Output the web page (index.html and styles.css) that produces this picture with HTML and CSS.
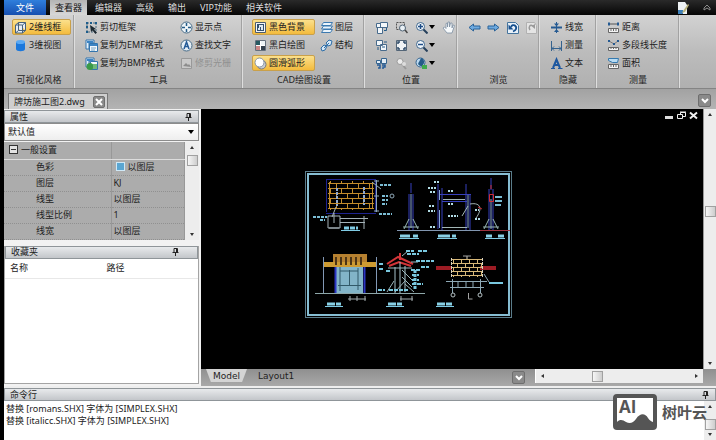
FILE: index.html
```html
<!DOCTYPE html>
<html lang="zh-CN">
<head>
  <meta charset="UTF-8">
  <title>牌坊施工图2.dwg</title>
  <link rel="stylesheet" href="styles.css">
</head>
<body>

  <!-- icon set -->
  <svg class="sprite" width="0" height="0" aria-hidden="true">
    <symbol id="i-wire" viewBox="0 0 13 13"><path d="M1.500 4l3-2.500h7v8l-3 2.500h-7zM1.500 4h7v8M8.500 4l3-2.500M4.500 1.500v8h7M4.500 9.500l-3 2.500" fill="#e8eef4" stroke="#45617c"/></symbol>
    <symbol id="i-cyl" viewBox="0 0 13 13"><path d="M2 3v7c0 3 9 3 9 0V3z" fill="#1c78dc"/><ellipse cx="6.500" cy="3" rx="4.500" ry="2" fill="#5aa9f4"/></symbol>
    <symbol id="i-clip" viewBox="0 0 13 13"><path d="M2 2h9v9H2z" fill="none" stroke="#4a6a80" stroke-dasharray="2 1"/><path d="M1 1h2v2H1zM10 1h2v2h-2zM1 10h2v2H1zM5 1h2v2H5zM1 5h2v2H1z" fill="#1d5d8c"/><path d="M5 4l6 4-2 .5 3 3-1.500 1.500-3-3.500L6 11z" fill="#1d2a33"/></symbol>
    <symbol id="i-emf" viewBox="0 0 13 13"><path d="M1 1h8v3H4v6H1z" fill="#e4f0fa" stroke="#3375ae"/><path d="M4.500 4.500h8v8h-8z" fill="#f3f8fc" stroke="#3375ae"/><path d="M2 2h6v2H2zM5 5h7v2H5z" fill="#3c84c4"/><path d="M6 9h5M6 11h4" stroke="#78a4c4"/></symbol>
    <symbol id="i-bmp" viewBox="0 0 13 13"><path d="M1 1h8v3H4v6H1z" fill="#e4f0fa" stroke="#3375ae"/><path d="M5.500 4.500h7v8h-7z" fill="#f3f8fc" stroke="#3375ae"/><path d="M2 2h6v2H2z" fill="#3c84c4"/><circle cx="5" cy="9.500" r="3.500" fill="#3b9a48"/><path d="M8 7h4v5H8z" fill="#6fb87a"/></symbol>
    <symbol id="i-point" viewBox="0 0 13 13"><circle cx="6.500" cy="6.500" r="5.500" fill="#eef4f8" stroke="#466a86"/><path d="M6.500 2v3M6.500 8v3M2 6.500h3M8 6.500h3" stroke="#245b88" stroke-width="1.500"/></symbol>
    <symbol id="i-find" viewBox="0 0 13 13"><circle cx="6.500" cy="6.500" r="5.500" fill="#e4eef6" stroke="#466a86"/><path d="M4 10l2.500-7L9 10M5 7.500h3" fill="none" stroke="#245b98" stroke-width="1.500"/></symbol>
    <symbol id="i-raster" viewBox="0 0 13 13"><path d="M1.500 1.500h10v10h-10z" fill="#c9c9c9" stroke="#999"/><path d="M3 9l3-3 2 2 1-1 2 3z" fill="#8d8d8d"/></symbol>
    <symbol id="i-dark" viewBox="0 0 13 13"><path d="M1.500 1.500h10v10h-10z" fill="#f4f6f8" stroke="#4c5d70"/><path d="M3 3h7v7H3z" fill="#33506e"/><path d="M5 4h4v5H7V6H6v3H4V7h1z" fill="#dfe9f2"/></symbol>
    <symbol id="i-bw" viewBox="0 0 13 13"><path d="M1.500 1.500h10v10h-10z" fill="#fff" stroke="#65707c"/><path d="M2 2h4v4H2z" fill="#285a62"/><path d="M7 7h4v4H7z" fill="#32404c"/><path d="M7 2h4v4H7z" fill="#ecf3f5"/><path d="M2 7h4v4H2z" fill="#c88"/></symbol>
    <symbol id="i-arc" viewBox="0 0 13 13"><circle cx="7.500" cy="7.500" r="4.500" fill="#c6ccd4" stroke="#777"/><circle cx="5.500" cy="5.500" r="4.500" fill="#fff" stroke="#8793a0"/></symbol>
    <symbol id="i-layer" viewBox="0 0 13 13"><path d="M3.500 1.500h9l-2 3h-9zM3.500 5h9l-2 3h-9zM3.500 8.500h9l-2 3h-9z" fill="#eaf4fc" stroke="#3d7ab0"/></symbol>
    <symbol id="i-link" viewBox="0 0 13 13"><g fill="#d6e8f6" stroke="#2e6ea8"><path d="M1 9l3-3 3 1-2 4-3 1zM6 4l3-3 3 1-1 4-3 1z"/><path d="M4 9l5-5"/></g></symbol>
    <symbol id="i-view1" viewBox="0 0 13 13"><g fill="#f3f7fa" stroke="#486b8c"><path d="M5.500 1.500h7v5h-7zM1.500 2.500h4v4h-4zM2.500 6.500h5v6h-5z"/></g><path d="M9 9.500h2.500V7" fill="none" stroke="#245b88"/></symbol>
    <symbol id="i-view2" viewBox="0 0 13 13"><g fill="#f3f7fa" stroke="#486b8c"><path d="M1.500 1.500h6v5h-6zM5.500 5.500h6v6h-6z"/></g><path d="M9 3h3M3 8v3M7 8h3" stroke="#245b88" fill="none"/></symbol>
    <symbol id="i-view3" viewBox="0 0 13 13"><g fill="#e3edf6" stroke="#36648e"><path d="M6.500 1.500h5v5h-5zM1.500 3.500h4v3h-4z"/></g><path d="M2 8h3v3H3M7 8h3v2H8v2" fill="none" stroke="#245b98" stroke-width="1.500"/></symbol>
    <symbol id="i-zoomwin" viewBox="0 0 13 13"><path d="M1.500 1.500h8v7h-8z" fill="none" stroke="#555" stroke-dasharray="2 1"/><circle cx="7.500" cy="7" r="3" fill="#e9f0f5" stroke="#506476"/><path d="M10 9l2.500 3" stroke="#444" stroke-width="1.500"/></symbol>
    <symbol id="i-fit" viewBox="0 0 13 13"><path d="M1.500 1.500h10v10h-10z" fill="#f0f3f5" stroke="#536577"/><path d="M3 5V3h2M8 3h2v2M10 8v2H8M5 10H3V8" fill="none" stroke="#2c4a68" stroke-width="1.500"/></symbol>
    <symbol id="i-zoomoff" viewBox="0 0 13 13"><circle cx="5" cy="4.500" r="3" fill="#ececec" stroke="#9b9b9b"/><path d="M7 7l4 5" stroke="#999" stroke-width="2"/><circle cx="9" cy="7" r="2" fill="#ddd"/></symbol>
    <symbol id="i-zoomin" viewBox="0 0 13 13"><circle cx="5.500" cy="5.500" r="4" fill="#f3f8fc" stroke="#3f678d"/><path d="M3 5.500h5M5.500 3v5" stroke="#1e4d86" stroke-width="1.500"/><path d="M8.500 8.500l4 4" stroke="#26405c" stroke-width="2"/></symbol>
    <symbol id="i-zoomout" viewBox="0 0 13 13"><circle cx="5.500" cy="5.500" r="4" fill="#f3f8fc" stroke="#3f678d"/><path d="M3 5.500h5" stroke="#1e4d86" stroke-width="1.500"/><path d="M8.500 8.500l4 4" stroke="#26405c" stroke-width="2"/></symbol>
    <symbol id="i-globe" viewBox="0 0 13 13"><circle cx="5.500" cy="5.500" r="4.500" fill="#bcd9f0" stroke="#36648e"/><path d="M6 1c4 1 4 6 1 8-3 0-5-2-3-4z" fill="#245b88"/><path d="M7 8h5v4H7z" fill="#3faa4d"/></symbol>
    <symbol id="i-hand" viewBox="0 0 13 13"><path d="M5 12L1 7l1.500-1L4 7.500V2.500l1.500-.5v4l.5-5h1.500v5l1-4H10v5l1-3 1.500.5L11 9l-1 3z" fill="#f6f9fb" stroke="#7d8fa2" stroke-width=".8"/></symbol>
    <symbol id="i-left" viewBox="0 0 13 13"><path d="M1 6.500L5.500 3v2H12v3H5.500v2z" fill="#6eaae0" stroke="#2a6298"/></symbol>
    <symbol id="i-right" viewBox="0 0 13 13"><path d="M12 6.500L7.500 3v2H1v3h6.500v2z" fill="#6eaae0" stroke="#2a6298"/></symbol>
    <symbol id="i-undo" viewBox="0 0 13 13"><path d="M1.500 1.500h8l3 3v8h-11z" fill="#e8f1f9" stroke="#45749d"/><path d="M5 6c2-4 6-1 5 2-.5 1.500-1.500 2-3 2.500" fill="none" stroke="#164f8e" stroke-width="1.800"/><path d="M2.500 3.500v5h5z" fill="#164f8e"/></symbol>
    <symbol id="i-redo" viewBox="0 0 13 13"><path d="M1.500 1.500h8l2 3v8h-10z" fill="#e4e4e4" stroke="#b1b1b1"/><path d="M8 5C5 3 3 6 5 9" fill="none" stroke="#999" stroke-width="1.500"/><path d="M10 3v5L6.500 5z" fill="#999"/></symbol>
    <symbol id="i-lw" viewBox="0 0 13 13"><path d="M1 6.500h11" stroke="#255a92" stroke-width="2"/><path d="M6.500 1v11" stroke="#255a92"/><path d="M4 2.500h5L6.500 5.500zM4 11h5L6.500 8z" fill="#255a92"/></symbol>
    <symbol id="i-dim" viewBox="0 0 13 13"><path d="M1.500 2v10M11.500 2v10M2 9.500h9M4 7.500l-2 2 2 2M9 7.500l2 2-2 2" fill="none" stroke="#34628e"/></symbol>
    <symbol id="i-a" viewBox="0 0 13 13"><path d="M3 11L6.500 2.500 10 11M4.500 8h4" fill="none" stroke="#1d57a0" stroke-width="2"/><path d="M1 11.500h4M8 11.500h4.500" stroke="#1d57a0"/></symbol>
    <symbol id="i-dist" viewBox="0 0 13 13"><path d="M2 3h9" stroke="#555"/><path d="M1 1.500h2v3H1zM10 1.500h2v3h-2z" fill="#255a92"/><path d="M1.500 7.500h10v4h-10z" fill="#f4f4f4" stroke="#666"/><path d="M4 8v2M6.500 8v2M9 8v2" stroke="#666"/></symbol>
    <symbol id="i-poly" viewBox="0 0 13 13"><path d="M2 2l5 3 4-3" fill="none" stroke="#777"/><path d="M1 1h2v2H1zM6 4h2v2H6zM10 1h2v2h-2z" fill="#255a92"/><path d="M1.500 8.500h10v3h-10z" fill="#f4f4f4" stroke="#666"/><path d="M4 9v1M6.500 9v1M9 9v1" stroke="#666"/></symbol>
    <symbol id="i-area" viewBox="0 0 13 13"><path d="M1.500 1.500h10l-1 4h-5l-4-2z" fill="#b8dcf4" stroke="#3579ae"/><path d="M1.500 7.500h10v4h-10z" fill="#f4f4f4" stroke="#666"/><path d="M4 8v2M6.500 8v2M9 8v2" stroke="#666"/></symbol>
    <symbol id="i-pin" viewBox="0 0 7 8"><path d="M2 .5h3.500v4H2zM4.500 1v3M.5 4.500h6M3.500 5v3" fill="none" stroke="#222"/></symbol>
    <symbol id="i-down" viewBox="0 0 6 4"><path d="M0 0h6L3 4z"/></symbol>
    <symbol id="i-chev" viewBox="0 0 8 8"><path d="M1 2l3 3 3-3" fill="none" stroke="#fff" stroke-width="2"/></symbol>
  </svg>

  <div class="window">

    <nav class="menubar">
      <button class="menu file">文件</button>
      <button class="menu current">查看器</button>
      <button class="menu">编辑器</button>
      <button class="menu">高级</button>
      <button class="menu">输出</button>
      <button class="menu">VIP功能</button>
      <button class="menu">相关软件</button>
      <div class="menu-tools">
        <button class="plain" aria-label="样式"><svg width="12" height="12" viewBox="0 0 12 12"><path d="M1 0h7l2 3v9H1z" fill="#eef2f4"/><path d="M1 8h5v4H1z" fill="#3d7fb8"/><path d="M11 2l-5 7-1 2 3-1 4-7z" fill="#b9b27c"/></svg></button>
        <button class="plain" aria-label="收起"><svg width="8" height="8" viewBox="0 0 8 8"><path d="M1 4l3-3 3 3v2L4 4 1 6z" fill="none" stroke="#8c8c8c"/></svg></button>
      </div>
    </nav>

    <div class="ribbon">
      <section class="group style">
        <div class="tools">
          <button class="tool on"><svg><use href="#i-wire"/></svg>2维线框</button>
          <button class="tool"><svg><use href="#i-cyl"/></svg>3维视图</button>
        </div>
        <h2>可视化风格</h2>
      </section>
      <section class="group kit">
        <div class="tools">
          <button class="tool"><svg><use href="#i-clip"/></svg>剪切框架</button>
          <button class="tool"><svg><use href="#i-emf"/></svg>复制为EMF格式</button>
          <button class="tool"><svg><use href="#i-bmp"/></svg>复制为BMP格式</button>
          <button class="tool"><svg><use href="#i-point"/></svg>显示点</button>
          <button class="tool"><svg><use href="#i-find"/></svg>查找文字</button>
          <button class="tool" disabled><svg><use href="#i-raster"/></svg>修剪光栅</button>
        </div>
        <h2>工具</h2>
      </section>
      <section class="group draw">
        <div class="tools">
          <button class="tool on"><svg><use href="#i-dark"/></svg>黑色背景</button>
          <button class="tool"><svg><use href="#i-bw"/></svg>黑白绘图</button>
          <button class="tool on"><svg><use href="#i-arc"/></svg>圆滑弧形</button>
          <button class="tool"><svg><use href="#i-layer"/></svg>图层</button>
          <button class="tool"><svg><use href="#i-link"/></svg>结构</button>
        </div>
        <h2>CAD绘图设置</h2>
      </section>
      <section class="group place">
        <div class="tools">
          <button class="tool" aria-label="视图一"><svg><use href="#i-view1"/></svg></button>
          <button class="tool" aria-label="视图二"><svg><use href="#i-view2"/></svg></button>
          <button class="tool" aria-label="视图三"><svg><use href="#i-view3"/></svg></button>
          <button class="tool" aria-label="窗口缩放"><svg><use href="#i-zoomwin"/></svg></button>
          <button class="tool" aria-label="适合窗口"><svg><use href="#i-fit"/></svg></button>
          <button class="tool" aria-label="缩放选择"><svg><use href="#i-zoomoff"/></svg></button>
          <button class="tool" aria-label="放大"><svg><use href="#i-zoomin"/></svg><svg class="caret"><use href="#i-down"/></svg></button>
          <button class="tool" aria-label="缩小"><svg><use href="#i-zoomout"/></svg><svg class="caret"><use href="#i-down"/></svg></button>
          <button class="tool" aria-label="旋转"><svg><use href="#i-globe"/></svg><svg class="caret"><use href="#i-down"/></svg></button>
          <button class="tool" aria-label="平移"><svg><use href="#i-hand"/></svg></button>
        </div>
        <h2>位置</h2>
      </section>
      <section class="group browse">
        <div class="tools">
          <button class="tool" aria-label="后退"><svg><use href="#i-left"/></svg></button>
          <button class="tool" aria-label="前进"><svg><use href="#i-right"/></svg></button>
          <button class="tool" aria-label="撤销"><svg><use href="#i-undo"/></svg></button>
          <button class="tool" aria-label="重做"><svg><use href="#i-redo"/></svg></button>
        </div>
        <h2>浏览</h2>
      </section>
      <section class="group hide">
        <div class="tools">
          <button class="tool"><svg><use href="#i-lw"/></svg>线宽</button>
          <button class="tool"><svg><use href="#i-dim"/></svg>测量</button>
          <button class="tool"><svg><use href="#i-a"/></svg>文本</button>
        </div>
        <h2>隐藏</h2>
      </section>
      <section class="group measure">
        <div class="tools">
          <button class="tool"><svg><use href="#i-dist"/></svg>距离</button>
          <button class="tool"><svg><use href="#i-poly"/></svg>多段线长度</button>
          <button class="tool"><svg><use href="#i-area"/></svg>面积</button>
        </div>
        <h2>测量</h2>
      </section>
    </div>

    <div class="docbar">
      <div class="doc-tab">
        <span>牌坊施工图2.dwg</span>
        <button class="close" aria-label="关闭"><svg width="8" height="8" viewBox="0 0 8 8"><path d="M1 1l6 6M7 1L1 7" stroke="#fff" stroke-width="2"/></svg></button>
      </div>
      <button class="drop" aria-label="文档列表"><svg width="8" height="8"><use href="#i-chev"/></svg></button>
    </div>

    <div class="workspace">
      <aside class="side">
        <section class="panel props">
          <header class="panel-head"><h3>属性</h3><svg class="pin"><use href="#i-pin"/></svg></header>
          <div class="preset">
            <select aria-label="属性">
              <option>默认值</option>
            </select>
            <svg class="caret"><use href="#i-down"/></svg>
          </div>
          <div class="prop-body">
            <table class="prop-table">
              <thead>
                <tr><th><span class="minus"></span>一般设置</th><th></th></tr>
              </thead>
              <tbody>
                <tr><td>色彩</td><td><span class="swatch"></span>以图层</td></tr>
                <tr><td>图层</td><td>KJ</td></tr>
                <tr><td>线型</td><td>以图层</td></tr>
                <tr><td>线型比例</td><td>1</td></tr>
                <tr><td>线宽</td><td>以图层</td></tr>
              </tbody>
            </table>
            <div class="vscroll"><i class="arrow up"></i><i class="thumb"></i><i class="arrow end"></i></div>
          </div>
        </section>
        <section class="panel favs">
          <header class="panel-head"><h3>收藏夹</h3><svg class="pin"><use href="#i-pin"/></svg></header>
          <table class="fav-table">
            <thead><tr><th>名称</th><th>路径</th></tr></thead>
          </table>
        </section>
      </aside>

      <main class="viewer">
        <div class="stage">
          <div class="canvas">
            <svg class="drawing" viewBox="201 109 502 260" role="img" aria-label="牌坊施工图">
              <defs>
                <pattern id="brick" x="328" y="181" width="11" height="10" patternUnits="userSpaceOnUse">
                  <path d="M0 2.500h11M0 7.500h11M2.500 -2v4M2.500 8v2M8.500 3v4" stroke="#c48d2c" stroke-width="1"/>
                </pattern>
                <pattern id="brick2" x="451" y="259" width="8" height="8" patternUnits="userSpaceOnUse">
                  <path d="M0 .5h8M0 4.500h8M2.500 0v4M6.500 4v4" stroke="#d8b878" stroke-width="1"/>
                </pattern>
              </defs>
              <rect x="305.500" y="171.500" width="206" height="146" fill="none" stroke="#5b7c8a"/>
              <rect x="308" y="174" width="201" height="141" fill="none" stroke="#86bdd2" stroke-width="2"/>

              <!-- plan -->
              <rect x="328" y="181" width="46" height="29" fill="url(#brick)"/>
              <path d="M326.500 179v33M375.500 179v33M326 213.500h50M327 179.500h48" stroke="#1e2390" fill="none"/>
              <path d="M329.500 182v26M372.500 182v26" stroke="#c48d2c"/>
              <path d="M337 188v18M364 187v18" stroke="#8fa9d0" stroke-width="2" stroke-dasharray="3 1"/>
              <path d="M376.500 180v32M374 181h5M374 196h5M374 211h5M372 182l9 7" stroke="#8fa9b8"/>
              <circle cx="392" cy="196" r="2" fill="none" stroke="#8fa9b8"/>
              <path d="M380 185h11M382 196h6M382 200h6M382 204h5M379 214h13M313 217h14M320 220h5" stroke="#7bbcd4" stroke-width="2" stroke-dasharray="3 1"/>
              <path d="M328 216h12v12h-12zM334 213v10M340 218.500h28M340 222.500h25M364 216v13M329 228h10M332 217l4-10" fill="none" stroke="#a4b2b8"/>
              <path d="M344 228h14" stroke="#80cbe4" stroke-width="3" stroke-dasharray="5 1"/>
              <path d="M341 230.500h19" stroke="#80cbe4"/>

              <!-- sections -->
              <path d="M397 230.500h83" stroke="#8296b0"/>
              <path d="M480 230.500h30" stroke="#9e3340"/>
              <g stroke="#3740bd" fill="none">
                <path d="M409 194v36M413 194v36M411 183v10M438 184v45M442 188v42M466 184v46M470 194v36M439 194.500h32M442 201.500h25M489 189v41M493 189v41M491 178v12"/>
              </g>
              <path d="M411 194v34M439.500 190v10M439.500 210v18M468 195v33M491 199v30" stroke="#8ba9d8"/>
              <path d="M404 229l5-10M418 229l-5-10M403 227h16M484 229l5-10M498 229l-5-10M483 227h16" stroke="#99b7b4"/>
              <path d="M443 199.500h22M442 227.500h25M462 216l6-10M470 204c12-2 12 6 6 14" stroke="#a3b6b6" fill="none"/>
              <path d="M434 182h6M428 188h8M430 192h6M448 191h6M448 204h6M429 206h6M428 211h7M430 227h6M448 216h10M475 219h6M475 210h4" stroke="#b2dce6" stroke-width="2" stroke-dasharray="2 1"/>
              <path d="M489.500 194.500h4v7h-4zM478 207l4 2M491 185v4" stroke="#cf2c35" fill="none"/>
              <path d="M495 197h7M495 201h7M495 205h6" stroke="#79bcd3" stroke-width="2"/>
              <path d="M400 236h10M413 236h5M438 236h12M452 236h4M486 236h6M498 236h6" stroke="#88d0e5" stroke-width="3"/>
              <path d="M399 238.500h20M437 238.500h20M485 238.500h20" stroke="#80cbe4"/>

              <!-- front elevation -->
              <path d="M315 293.500h110" stroke="#8ea7a9"/>
              <path d="M323.500 257v36M376.500 257v36" stroke="#8298b4"/>
              <rect x="333" y="254" width="34" height="8" fill="#b68130"/>
              <rect x="324" y="262" width="52" height="5" fill="#cd9b32"/>
              <path d="M336 257v8M341 257v8M346 257v8M351 257v8M356 257v8M361 257v8" stroke="#4b3415" stroke-width="2"/>
              <rect x="336" y="267" width="27" height="26" fill="#82b4c8"/>
              <path d="M335.500 267v26M364.500 267v26" stroke="#2b34c2" stroke-width="2"/>
              <path d="M340 267v24M349.500 270v15M358 268v22M338 285.500h23M340 271h18" stroke="#315968"/>
              <path d="M348 299h18M350 296v5M357 296v5M365 296v5M400 299h13M401 296v5M412 296v5" stroke="#a4adb0"/>
              <path d="M327 304h14M388 304h14M437 304h15" stroke="#88d0e5" stroke-width="3" stroke-dasharray="8 1"/>
              <path d="M325 306.500h18M386 306.500h18M436 306.500h18" stroke="#80cbe4"/>

              <!-- side elevation -->
              <path d="M387 264l11-7 15 7M389 266l10-4 12 4M400 253v7" stroke="#d33539" stroke-width="2" fill="none"/>
              <path d="M400 262v31M395 267v26M405 266v26" stroke="#a7c4cd"/>
              <path d="M388 268h24M402 270l10 10M402 277l10 10M394 281l-7 11M405 281l-10 11M405 284l9 8M402 256l6-5M411 262h7" stroke="#9bb6bc" fill="none"/>
              <path d="M406 251h8M418 251h9M407 254h12M416 261h18M379 264h5M379 269h5M386 271h5M421 267h8M411 270h9M412 275h7M412 280h7M412 284h11M378 290h7M389 290h20" stroke="#79c8df" stroke-width="2" stroke-dasharray="4 1"/>
              <path d="M415 270v20" stroke="#79c8df" stroke-width="3" stroke-dasharray="3 1"/>

              <!-- roof detail -->
              <path d="M436 268h16M480 268h16" stroke="#9d1c24" stroke-width="4"/>
              <rect x="451" y="259" width="31" height="18" fill="url(#brick2)"/>
              <path d="M451.500 258v20M482.500 258v20M467 256v4" stroke="#d8d3c3" stroke-dasharray="3 1"/>
              <path d="M446 281.500h41M450 287.500h34M452.500 279v14M480.500 279v14M458 281v6M466 281v6M473 281v6M484 274l5 8" stroke="#8ea9b6"/>
              <circle cx="453" cy="295" r="2" fill="none" stroke="#b3bfc2"/>
              <circle cx="480" cy="295" r="2" fill="none" stroke="#b3bfc2"/>
              <path d="M468.500 293v6h4M463 256h8" stroke="#a3a3a3" fill="none"/>
              <path d="M489 283h14" stroke="#79c8df" stroke-width="2"/>
            </svg>
            <div class="win-btns">
              <button class="plain" aria-label="最小化"><svg width="9" height="9" viewBox="0 0 9 9"><path d="M0 5h8v3H0z" fill="#ddd"/></svg></button>
              <button class="plain" aria-label="还原"><svg width="9" height="9" viewBox="0 0 9 9"><path d="M3.500 3V1.500h5v4H6M.5 3.500h5v4h-5zM3 1h6" fill="none" stroke="#eee"/></svg></button>
              <button class="plain" aria-label="关闭"><svg width="9" height="9" viewBox="0 0 9 9"><path d="M1 1.500l7 6M8 1.500l-7 6" stroke="#eee" stroke-width="2"/></svg></button>
            </div>
          </div>
          <div class="vscroll main-scroll"><i class="arrow up"></i><i class="thumb"></i><i class="arrow end"></i></div>
        </div>
        <div class="layouts">
          <button class="layout current">Model</button>
          <button class="layout">Layout1</button>
          <button class="drop" aria-label="布局列表"><svg width="8" height="8"><use href="#i-chev"/></svg></button>
          <div class="hscroll"><i class="arrow left"></i><i class="thumb"></i><i class="arrow right"></i></div>
        </div>
      </main>
    </div>

    <section class="command">
      <header class="panel-head"><h3>命令行</h3><svg class="pin"><use href="#i-pin"/></svg></header>
      <div class="log">
        <div class="lines">
          <p>替换 [romans.SHX] 字体为 [SIMPLEX.SHX]</p>
          <p>替换 [italicc.SHX] 字体为 [SIMPLEX.SHX]</p>
        </div>
        <div class="vscroll"><i class="arrow up"></i><i class="thumb"></i><i class="arrow end"></i></div>
      </div>
      <div class="brand">
        <div class="brand-mark">
          <span>AI</span>
          <svg viewBox="0 0 36 12" preserveAspectRatio="none"><path d="M0 12V8C3 5 6 6 9 8 13 10 16 9 19 5 23-1 28-1 31 4 33 7 34 7 36 8v4z" fill="#555"/></svg>
        </div>
        <strong>树叶云</strong>
      </div>
    </section>

  </div>

</body>
</html>
```
FILE: styles.css
```css
* {
  box-sizing: border-box;
}

body {
  margin: 0;
  background: #000;
  color: #222;
  font-family: "Noto Sans", "Noto Sans CJK SC", sans-serif;
  font-size: 9px;
  line-height: 12px;
}

h2, h3, p {
  margin: 0;
  font-size: 9px;
  font-weight: normal;
}

button, select {
  font: inherit;
  color: inherit;
  border: 0;
  padding: 0;
  background: none;
}

button {
  cursor: pointer;
}

svg {
  display: block;
  flex: none;
}

.sprite {
  position: absolute;
}

.window {
  display: flex;
  flex-direction: column;
  min-height: 100vh;
  padding-left: 4px;
  background: #000;
}

/* menu */
.menubar {
  display: flex;
  height: 15px;
  background: linear-gradient(#2a2a2a, #050505);
  color: #ddd;
}

.menu {
  padding: 0 7px;
  line-height: 14px;
  white-space: nowrap;
}

.menu.file {
  padding: 0 12px;
  margin-right: 4px;
  background: linear-gradient(#2f7fdc, #174fb0);
  color: #fff;
}

.menu.current {
  padding: 0 5px;
  margin-right: 1px;
  background: linear-gradient(#b4b4b4, #d8d8d8);
  color: #111;
}

.menu-tools {
  display: flex;
  align-items: center;
  gap: 14px;
  margin-left: auto;
  padding-right: 5px;
}

/* ribbon */
.ribbon {
  display: flex;
  height: 74px;
  background: linear-gradient(#d2d2d2, #bcbcbc 50%, #b0b0b0);
  border-bottom: 1px solid #848484;
}

.group {
  display: flex;
  flex-direction: column;
  flex: none;
  padding: 4px 2px 0 8px;
  border-right: 1px solid #dedede;
  box-shadow: inset -1px 0 #a2a2a2;
}

.group h2 {
  margin: auto 6px 1px 0;
  line-height: 14px;
  text-align: center;
}

.tools {
  display: grid;
  grid-auto-flow: column;
  grid-template-rows: repeat(3, 16px);
  row-gap: 2px;
  justify-content: start;
}

.tool {
  display: flex;
  align-items: center;
  gap: 2px;
  padding: 0 1px;
  border: 1px solid transparent;
  border-radius: 2px;
  white-space: nowrap;
}

.tool svg {
  width: 13px;
  height: 13px;
}

.tool.on {
  background: linear-gradient(#fbe08c, #f3bb3d);
  border-color: #c9a04a;
}

.tool:disabled {
  color: #919191;
}

.tool svg.caret, .caret {
  width: 6px;
  height: 4px;
}

.style { width: 71px; }
.style .tools { grid-template-columns: 59px; }
.kit { width: 168px; }
.kit .tools { grid-template-columns: 95px auto; }
.draw { width: 122px; padding-left: 9px; }
.draw .tools { grid-template-columns: 63px auto; column-gap: 3px; }
.place { width: 93px; }
.place .tools { grid-template-columns: 20px 20px 27px auto; }
.place .tool { gap: 1px; }
.browse { width: 82px; }
.browse .tools { grid-template-columns: repeat(4, 19px); grid-auto-flow: row; }
.hide { width: 57px; }
.measure { width: 83px; }

/* document tabs */
.docbar {
  display: flex;
  align-items: flex-end;
  height: 20px;
  padding: 0 5px 0 4px;
  background: linear-gradient(#a2a2a2, #b4b4b4);
}

.doc-tab {
  display: flex;
  align-items: center;
  gap: 8px;
  height: 16px;
  padding: 0 2px 0 5px;
  background: #cfcfcf;
  border: 1px solid #777;
  border-bottom: 0;
}

.close, .drop {
  display: flex;
  align-items: center;
  justify-content: center;
  width: 13px;
  height: 13px;
  background: #8a8a8a;
  border: 1px solid #6e6e6e;
  border-radius: 2px;
}

.close {
  width: 12px;
  height: 12px;
}

.docbar .drop {
  margin: 0 0 2px auto;
}

/* workspace */
.workspace {
  display: flex;
  flex: 1;
  background: #f2f2f2;
}

.side {
  display: flex;
  flex-direction: column;
  gap: 6px;
  width: 195px;
  padding: 1px 0 2px;
}

.panel-head {
  display: flex;
  align-items: center;
  justify-content: space-between;
  height: 13px;
  padding: 0 6px 0 5px;
  background: linear-gradient(#e8eaec, #c3c6ca);
  border: 1px solid #8f9599;
}

.pin {
  width: 7px;
  height: 8px;
}

.favs .pin {
  margin-right: 12px;
}

.preset {
  position: relative;
}

.preset select {
  display: block;
  width: 100%;
  height: 18px;
  padding: 0 3px;
  appearance: none;
  background: linear-gradient(#fff, #eee);
  border: 1px solid #8c8c8c;
}

.preset .caret {
  position: absolute;
  right: 5px;
  top: 7px;
}

.prop-body {
  display: flex;
  margin-top: 1px;
}

.prop-table {
  flex: 1;
  border-collapse: collapse;
  table-layout: fixed;
  background: #acacac;
}

.prop-table th, .prop-table td {
  height: 16px;
  padding: 0 0 0 2px;
  border-bottom: 1px dotted #909090;
  border-right: 1px solid #989898;
  font-weight: normal;
  text-align: left;
}

.prop-table th {
  height: 17px;
  border-bottom: 1px solid #ddd;
}

.prop-table th:first-child {
  width: 107px;
  padding-left: 5px;
}

.prop-table td:first-child {
  padding-left: 32px;
}

.minus {
  display: inline-block;
  width: 9px;
  height: 9px;
  margin-right: 3px;
  border: 1px solid #333;
  background: linear-gradient(#333, #333) center / 5px 1px no-repeat #e2e2e2;
  vertical-align: -1px;
}

.swatch {
  display: inline-block;
  width: 9px;
  height: 9px;
  margin: 0 3px 0 2px;
  background: #5aa6d2;
  border: 1px solid #cfe8f6;
  vertical-align: -1px;
}

.favs {
  display: flex;
  flex-direction: column;
  flex: 1;
  background: #fff;
  border: 1px solid #a4a4a4;
  border-top: 0;
}

.fav-table {
  width: 100%;
  border-collapse: collapse;
  table-layout: fixed;
}

.fav-table th {
  height: 20px;
  padding: 0 5px;
  border-bottom: 1px solid #e8e8e8;
  font-weight: normal;
  text-align: left;
}

/* scroll bars */
.vscroll, .hscroll {
  display: flex;
  align-items: center;
  background: #ededed;
}

.vscroll {
  flex-direction: column;
  width: 12px;
  padding: 4px 0;
}

.prop-body .vscroll {
  width: 14px;
}

.thumb {
  width: 11px;
  height: 11px;
  background: linear-gradient(90deg, #f6f6f6, #cdcdcd);
  border: 1px solid #a0a0a0;
}

.vscroll .thumb {
  margin-top: 6px;
}

.vscroll .end {
  margin-top: auto;
}

.arrow {
  border: 2px solid transparent;
}

.arrow.up {
  border-top: 0;
  border-bottom: 3px solid #333;
}

.arrow.end {
  border-bottom: 0;
  border-top: 3px solid #333;
}

.arrow.left {
  border-left: 0;
  border-right: 3px solid #333;
}

.arrow.right {
  border-right: 0;
  border-left: 3px solid #333;
}

/* drawing area */
.viewer {
  display: flex;
  flex-direction: column;
  flex: 1;
  min-width: 0;
  margin-left: 2px;
}

.stage {
  display: flex;
  flex: 1;
}

.canvas {
  position: relative;
  display: flex;
  flex: 1;
  min-width: 0;
  background: #000;
}

.drawing {
  flex: 1;
  width: 100%;
  min-width: 0;
}

.win-btns {
  position: absolute;
  top: 2px;
  right: 5px;
  display: flex;
  gap: 3px;
}

.main-scroll {
  border-left: 1px solid #999;
  width: 13px;
}

.main-scroll .thumb {
  margin-top: 36%;
  margin-top: 90px;
}

.layouts {
  display: flex;
  align-items: flex-start;
  height: 17px;
  padding-left: 5px;
  background: linear-gradient(#8f8f8f, #a9a9a9);
  font-family: "DejaVu Sans", sans-serif;
}

.layout {
  height: 13px;
  padding: 0 5px;
  line-height: 12px;
}

.layout.current {
  width: 41px;
  margin-right: 6px;
  background: #d4d4d4;
  clip-path: polygon(0 0, 100% 0, 88% 100%, 12% 100%);
}

.layouts .drop {
  margin: 2px 10px 0 auto;
}

.hscroll {
  justify-content: space-between;
  width: 168px;
  height: 14px;
  margin-right: 13px;
  padding: 0 5px;
  border-left: 1px solid #fff;
}

.hscroll .thumb {
  margin-right: 44px;
}

/* command line */
.command {
  position: relative;
  display: flex;
  flex-direction: column;
  height: 54px;
  padding-top: 2px;
  background: #eee;
}

.command .panel-head {
  flex: none;
}

.log {
  display: flex;
  flex: 1;
  background: #fff;
}

.lines {
  flex: 1;
  padding: 2px 2px;
}

.log .thumb {
  margin-top: 11px;
}

.brand {
  position: absolute;
  right: 9px;
  top: 8px;
  display: flex;
  align-items: center;
  gap: 5px;
  color: #555;
}

.brand strong {
  font-size: 15px;
  line-height: 20px;
}

.brand-mark {
  display: flex;
  flex-direction: column;
  justify-content: space-between;
  width: 44px;
  height: 36px;
  padding-top: 2px;
  background: #fff;
  border: 4px solid #555;
  border-radius: 4px;
}

.brand-mark span {
  padding-left: 2px;
  font: bold 17px/14px "Open Sans", sans-serif;
}

.brand-mark svg {
  width: 100%;
  height: 12px;
}
```
